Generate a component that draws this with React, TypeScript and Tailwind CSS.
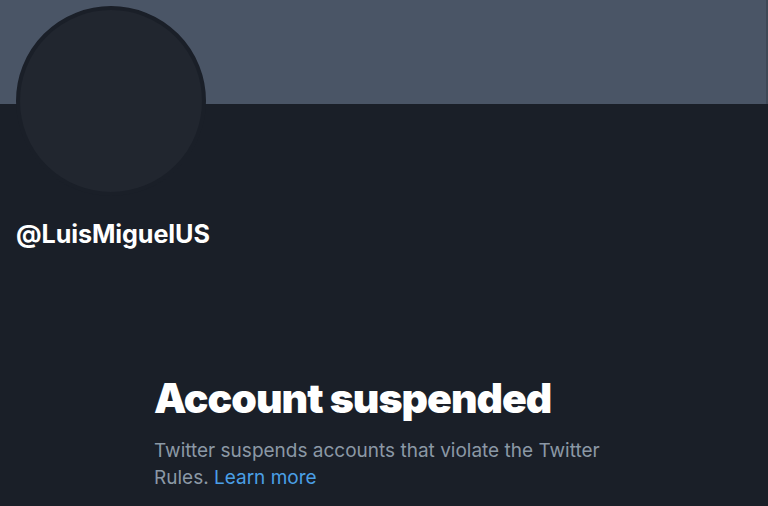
export default function App() {
  return (
    <div className="w-[768px] h-[506px] overflow-hidden bg-[#1a1f28] font-['Inter',sans-serif]">
      <div className="h-[104px] bg-[#4a5566] border-r-2 border-[#3f4957]" />
      <div className="px-[16px]">
        <div className="-mt-[98px] w-[190px] h-[190px] rounded-full bg-[#21262f] border-[4px] border-[#1a1f28]" />
        <div className="mt-[22px] text-[25.2px] leading-[32px] font-bold text-white tracking-[-0.1px]">
          @LuisMiguelUS
        </div>
      </div>
      <div className="ml-[154px] mt-[124px] w-[460px]">
        <h1 className="text-[41px] leading-[48px] font-black text-white tracking-[-1px]">
          Account suspended
        </h1>
        <p className="mt-[15px] text-[19px] leading-[27px] text-[#8b98a5]">
          Twitter suspends accounts that violate the Twitter Rules.{" "}
          <span className="text-[#4a9fe6]">Learn more</span>
        </p>
      </div>
    </div>
  );
}
